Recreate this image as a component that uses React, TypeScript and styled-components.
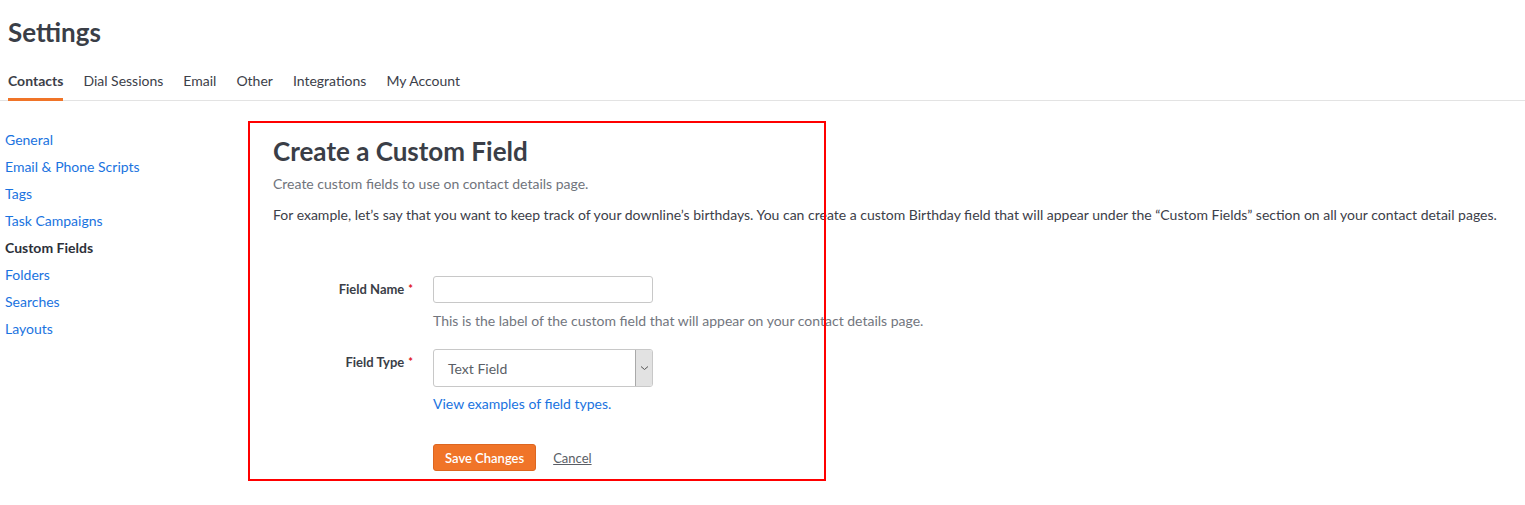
import React from "react";
import styled, { createGlobalStyle } from "styled-components";

const Global = createGlobalStyle`
  html, body { margin: 0; padding: 0; background: #fff; }
  body { font-family: Lato, "Liberation Sans", sans-serif; color: #3c4049; }
  * { box-sizing: border-box; }
`;

const Page = styled.div`
  width: 1525px;
  min-height: 505px;
`;

const Header = styled.header`
  padding: 17px 8px 0 8px;
`;

const Title = styled.h1`
  margin: 0;
  font-size: 26px;
  line-height: 30px;
  font-weight: 700;
  color: #3a3e47;
`;

const Tabs = styled.nav`
  display: flex;
  gap: 20px;
  padding: 0 8px;
  margin-top: 24px;
  border-bottom: 1px solid #e3e3e3;
`;

const Tab = styled.a<{ $active?: boolean }>`
  display: block;
  font-size: 14px;
  line-height: 20px;
  padding-bottom: 7px;
  color: #3c4049;
  font-weight: ${(p) => (p.$active ? 700 : 400)};
  border-bottom: 3px solid ${(p) => (p.$active ? "#f07428" : "transparent")};
  margin-bottom: -1px;
  cursor: pointer;
`;

const Main = styled.div`
  display: flex;
  padding-top: 20px;
`;

const Sidebar = styled.ul`
  list-style: none;
  margin: 0;
  padding: 9px 0 0 5px;
  width: 248px;
  display: flex;
  flex-direction: column;
  gap: 7px;
`;

const SideItem = styled.li<{ $active?: boolean }>`
  font-size: 14px;
  line-height: 20px;
  color: ${(p) => (p.$active ? "#2d3039" : "#1a73e0")};
  font-weight: ${(p) => (p.$active ? 700 : 400)};
`;

const Content = styled.section`
  position: relative;
  padding: 14px 0 0 25px;
  flex: 1;
`;

const Highlight = styled.div`
  position: absolute;
  left: 0;
  top: 0;
  width: 578px;
  height: 360px;
  border: 2.5px solid #f00;
  pointer-events: none;
`;

const CardTitle = styled.h2`
  margin: 0;
  font-size: 26px;
  line-height: 32px;
  font-weight: 700;
  color: #3a3e47;
`;

const Subtitle = styled.p`
  margin: 0;
  margin-top: 8px;
  font-size: 14px;
  line-height: 18px;
  color: #70747c;
`;

const Paragraph = styled.p`
  margin: 0;
  margin-top: 13px;
  font-size: 14px;
  line-height: 18px;
  color: #3c4049;
  white-space: nowrap;
`;

const Form = styled.form`
  margin-top: 52px;
  display: grid;
  grid-template-columns: 160px 220px;
`;

const Label = styled.label<{ $top: number }>`
  font-size: 13px;
  font-weight: 700;
  color: #3a3e47;
  text-align: right;
  padding-right: 20px;
  padding-top: ${(p) => p.$top}px;
  line-height: 14px;
`;

const Req = styled.span`
  color: #e0101a;
  margin-left: 4px;
  font-size: 11px;
  vertical-align: top;
`;

const FieldCol = styled.div`
  display: flex;
  flex-direction: column;
`;

const Input = styled.input`
  width: 220px;
  height: 27px;
  border: 1px solid #c8c8c8;
  border-radius: 3px;
  background: #fff;
`;

const Help = styled.div`
  margin-top: 10px;
  font-size: 14px;
  line-height: 16px;
  color: #72767e;
  white-space: nowrap;
`;

const SelectBox = styled.div`
  margin-top: 20px;
  width: 220px;
  height: 38px;
  border: 1px solid #c8c8c8;
  border-radius: 3px;
  display: flex;
  align-items: stretch;
  overflow: hidden;
`;

const SelectText = styled.div`
  flex: 1;
  padding-left: 14px;
  display: flex;
  align-items: center;
  font-size: 14px;
  color: #5a5e66;
`;

const SelectArrow = styled.div`
  width: 17px;
  background: #e2e2e2;
  border-left: 1px solid #a9a9a9;
  display: flex;
  align-items: center;
  justify-content: center;
`;

const Link = styled.a`
  margin-top: 9px;
  font-size: 14px;
  line-height: 16px;
  color: #1a73e0;
  white-space: nowrap;
`;

const Actions = styled.div`
  margin-top: 32px;
  display: flex;
  align-items: center;
  gap: 17px;
`;

const SaveButton = styled.button`
  height: 27px;
  padding: 0 11px;
  background: #f07428;
  border: 1px solid #dd6620;
  border-radius: 3px;
  color: #fff;
  font-family: inherit;
  font-size: 13px;
  font-weight: 600;
  white-space: nowrap;
`;

const Cancel = styled.a`
  font-size: 13px;
  color: #5a5e66;
  text-decoration: underline;
`;

const Spacer = styled.div``;

export default function App() {
  return (
    <Page>
      <Global />
      <Header>
        <Title>Settings</Title>
      </Header>
      <Tabs>
        <Tab $active>Contacts</Tab>
        <Tab>Dial Sessions</Tab>
        <Tab>Email</Tab>
        <Tab>Other</Tab>
        <Tab>Integrations</Tab>
        <Tab>My Account</Tab>
      </Tabs>
      <Main>
        <Sidebar>
          <SideItem>General</SideItem>
          <SideItem>Email &amp; Phone Scripts</SideItem>
          <SideItem>Tags</SideItem>
          <SideItem>Task Campaigns</SideItem>
          <SideItem $active>Custom Fields</SideItem>
          <SideItem>Folders</SideItem>
          <SideItem>Searches</SideItem>
          <SideItem>Layouts</SideItem>
        </Sidebar>
        <Content>
          <CardTitle>Create a Custom Field</CardTitle>
          <Subtitle>Create custom fields to use on contact details page.</Subtitle>
          <Paragraph>
            For example, let’s say that you want to keep track of your downline’s birthdays. You can create a custom
            Birthday field that will appear under the “Custom Fields” section on all your contact detail pages.
          </Paragraph>
          <Form>
            <Label $top={6}>
              Field Name<Req>*</Req>
            </Label>
            <FieldCol>
              <Input />
              <Help>This is the label of the custom field that will appear on your contact details page.</Help>
            </FieldCol>
            <Label $top={26}>
              Field Type<Req>*</Req>
            </Label>
            <FieldCol>
              <SelectBox>
                <SelectText>Text Field</SelectText>
                <SelectArrow>
                  <svg width="9" height="6" viewBox="0 0 9 6">
                    <path d="M1 1.5 L4.5 4.5 L8 1.5" fill="none" stroke="#555" strokeWidth="1" />
                  </svg>
                </SelectArrow>
              </SelectBox>
              <Link>View examples of field types.</Link>
            </FieldCol>
            <Spacer />
            <Actions>
              <SaveButton type="button">Save Changes</SaveButton>
              <Cancel>Cancel</Cancel>
            </Actions>
          </Form>
          <Highlight />
        </Content>
      </Main>
    </Page>
  );
}
